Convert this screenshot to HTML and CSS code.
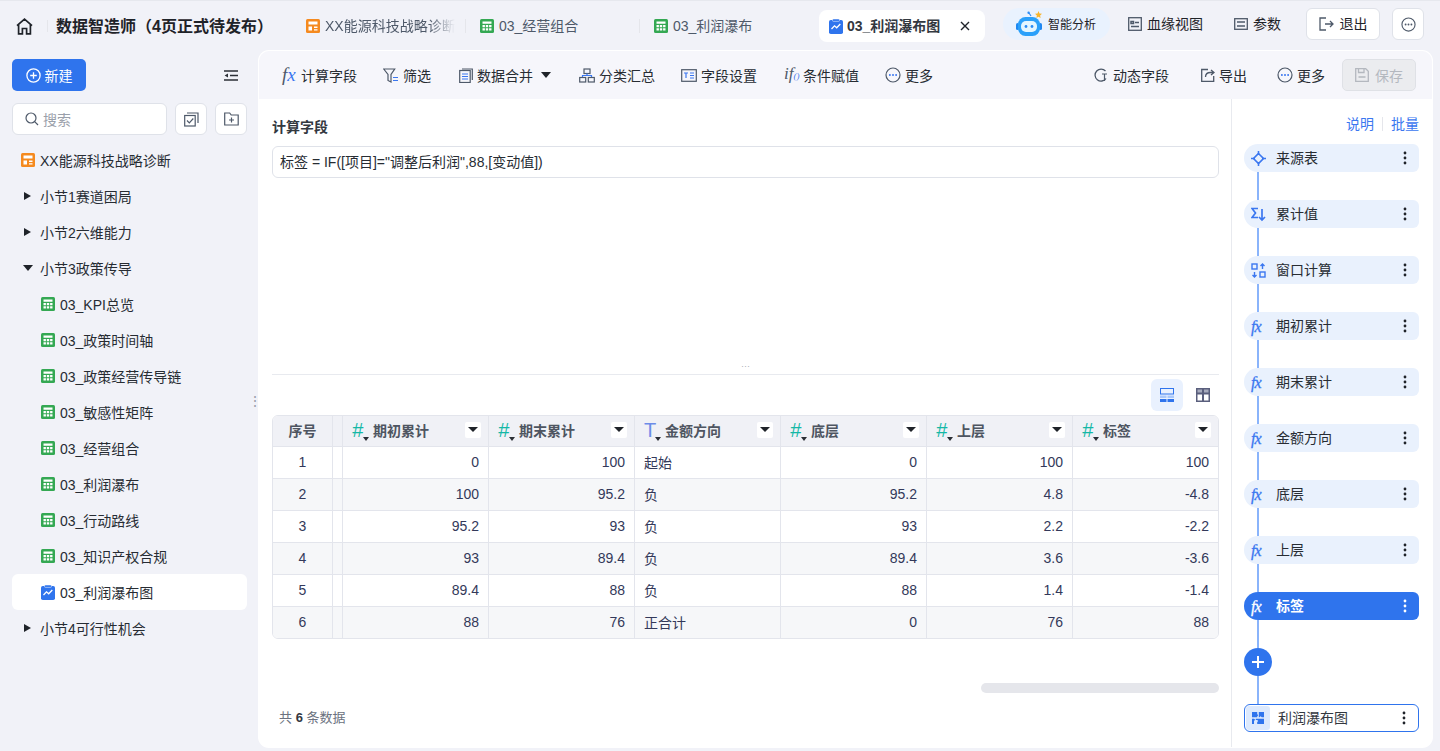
FILE: index.html
```html
<!DOCTYPE html>
<html lang="zh-CN">
<head>
    <meta charset="UTF-8">
    <meta name="viewport" content="width=device-width, initial-scale=1.0">
    <title>数据智造师</title>
    <link rel="stylesheet" href="styles.css">
</head>
<body>
    <svg class="defs" width="0" height="0">
        <symbol id="sheet" viewBox="0 0 14 14">
            <rect width="14" height="14" rx="1.5" fill="#34a853"/>
            <path d="M2.500 2.500h9v2.300h-9zM2.500 6h2.400v2.200H2.500zM5.800 6h2.400v2.200H5.800zM9.100 6h2.400v2.200H9.100zM2.500 9.300h2.400v2.200H2.500zM5.800 9.300h2.400v2.200H5.800zM9.100 9.300h2.400v2.200H9.100z" fill="#fff"/>
        </symbol>
        <symbol id="board" viewBox="0 0 14 14">
            <rect width="14" height="14" rx="1.500" fill="#f58a1f"/>
            <path d="M2.500 2.500h9v3h-9zM2.500 7.500h3.500v4h-3.500zM8 7.500h3.500v1.600H8zM8 10.200h3.500v1.300H8z" fill="#fff"/>
        </symbol>
        <symbol id="chart" viewBox="0 0 14 15">
            <rect y="1" width="14" height="14" rx="1.800" fill="#2f74ed"/>
            <rect x="3.500" width="7" height="2.400" rx="1" fill="#2f74ed" stroke="#fff" stroke-width=".5"/>
            <path d="M2.500 10l3-3.200 2.200 2 3.600-3.800" fill="none" stroke="#fff" stroke-width="1.300"/>
        </symbol>
        <symbol id="more" viewBox="0 0 16 16">
            <circle cx="8" cy="8" r="7" fill="none" stroke="#4e5969" stroke-width="1.200"/>
            <circle cx="4.900" cy="8" r="1" fill="#3b77f0"/>
            <circle cx="8" cy="8" r="1" fill="#3b77f0"/>
            <circle cx="11.100" cy="8" r="1" fill="#3b77f0"/>
        </symbol>
        <symbol id="vdots" viewBox="0 0 4 14">
            <circle cx="2" cy="2" r="1.400"/>
            <circle cx="2" cy="7" r="1.400"/>
            <circle cx="2" cy="12" r="1.400"/>
        </symbol>
    </svg>

    <header class="topbar">
        <svg class="home" width="17" height="17" viewBox="0 0 17 17" fill="none" stroke="#1f2329" stroke-width="1.700">
            <path d="M1 7.600L8.500 1.200 16 7.600M2.600 6.400V15.800h3.800V10.500h4.200v5.300h3.800V6.400"/>
        </svg>
        <span class="topbar-sep"></span>
        <h1 class="app-title">数据智造师（4页正式待发布）</h1>
        <nav class="tabs">
            <div class="tab tab-first"><svg width="14" height="14"><use href="#board"/></svg><span class="tab-fade">XX能源科技战略诊断</span></div>
            <div class="tab"><svg width="14" height="14"><use href="#sheet"/></svg><span>03_经营组合</span></div>
            <div class="tab"><svg width="14" height="14"><use href="#sheet"/></svg><span>03_利润瀑布</span></div>
            <div class="tab-active">
                <svg width="14" height="15"><use href="#chart"/></svg>
                <span>03_利润瀑布图</span>
                <svg class="tab-close" width="10" height="10" viewBox="0 0 10 10" stroke="#1f2329" stroke-width="1.400"><path d="M1 1l8 8M9 1l-8 8"/></svg>
            </div>
        </nav>
        <div class="ai-pill">
            <svg width="28" height="26" viewBox="0 0 28 26">
                <path d="M15 5l-2-3" stroke="#2f8cf5" stroke-width="1.200"/>
                <circle cx="12.600" cy="1.800" r="1.200" fill="#2f8cf5"/>
                <path d="M22.500 0l1 2.400 2.500.3-1.900 1.700.5 2.600-2.100-1.300-2.200 1.300.6-2.600-1.900-1.700 2.500-.3z" fill="#f9b52c"/>
                <rect x="0" y="12" width="3" height="7" rx="1.500" fill="#1e88f2"/>
                <rect x="23" y="12" width="3" height="7" rx="1.500" fill="#1e88f2"/>
                <rect x="2" y="6" width="22" height="19" rx="7.500" fill="#2aa0fa"/>
                <rect x="5" y="10" width="16" height="11" rx="5" fill="#e4f6ff"/>
                <circle cx="10" cy="15.500" r="1.400" fill="#2a8cf5"/>
                <circle cx="16" cy="15.500" r="1.400" fill="#2a8cf5"/>
            </svg>
            <span>智能分析</span>
        </div>
        <div class="top-link top-link-lineage">
            <svg width="14" height="14" viewBox="0 0 14 14" fill="none" stroke="#4e5969" stroke-width="1.300"><rect x=".7" y=".7" width="12.600" height="12.600"/><path d="M3 4.500h2.500v2H3zM3 9.500h8M7 5.500h4" stroke-width="1.500"/></svg>
            <span>血缘视图</span>
        </div>
        <div class="top-link top-link-param">
            <svg width="14" height="14" viewBox="0 0 14 14" fill="none" stroke="#4e5969" stroke-width="1.300"><rect x=".7" y="1.700" width="12.600" height="10.600"/><path d="M3 5h8M3 9h8" stroke-width="1.400"/></svg>
            <span>参数</span>
        </div>
        <button class="btn-logout">
            <svg width="15" height="14" viewBox="0 0 15 14" fill="none" stroke="#4e5969" stroke-width="1.300"><path d="M7 1H1v12h6M6 7h8M11 4l3 3-3 3"/></svg>
            <span>退出</span>
        </button>
        <button class="btn-square"><svg width="15" height="15" viewBox="0 0 16 16"><circle cx="8" cy="8" r="7" fill="none" stroke="#4e5969" stroke-width="1.200"/><circle cx="4.900" cy="8" r="1" fill="#4e5969"/><circle cx="8" cy="8" r="1" fill="#4e5969"/><circle cx="11.100" cy="8" r="1" fill="#4e5969"/></svg></button>
    </header>

    <div class="workspace">
        <aside class="sidebar">
            <div class="side-top">
                <button class="btn-new">
                    <svg width="15" height="15" viewBox="0 0 15 15" fill="none" stroke="#fff" stroke-width="1.300"><circle cx="7.500" cy="7.500" r="6.600"/><path d="M7.500 4.200v6.600M4.200 7.500h6.600"/></svg>
                    <span>新建</span>
                </button>
                <svg width="14" height="11" viewBox="0 0 14 11" stroke="#2b2f36" stroke-width="1.500" fill="#2b2f36"><path d="M0 1h14M6 5.500h8M0 10h14" fill="none"/><path d="M4 3.500L.6 5.500 4 7.500z" stroke="none"/></svg>
            </div>
            <div class="side-search">
                <div class="search-box">
                    <svg width="14" height="14" viewBox="0 0 14 14" fill="none" stroke="#4e5969" stroke-width="1.200"><circle cx="6" cy="6" r="5"/><path d="M9.700 9.700L13 13"/></svg>
                    <span>搜索</span>
                </div>
                <button class="btn-icon"><svg width="15" height="15" viewBox="0 0 15 15" fill="none" stroke="#4e5969" stroke-width="1.200"><rect x=".7" y="3.500" width="10.500" height="10.500"/><path d="M3 1h11v10"/><path d="M3 8.500l2.300 2.300 4-4.300"/></svg></button>
                <button class="btn-icon"><svg width="15" height="14" viewBox="0 0 15 14" fill="none" stroke="#4e5969" stroke-width="1.200"><path d="M.7 1h5l1.500 2h7v10H.7zM5 8h5M7.500 5.500v5"/></svg></button>
            </div>
            <ul class="tree">
                <li class="tree-item"><svg width="14" height="14"><use href="#board"/></svg>XX能源科技战略诊断</li>
                <li class="tree-item tree-group"><i class="caret-right"></i>小节1赛道困局</li>
                <li class="tree-item tree-group"><i class="caret-right"></i>小节2六维能力</li>
                <li class="tree-item tree-group"><i class="caret-down"></i>小节3政策传导</li>
                <li class="tree-item tree-leaf"><svg width="14" height="14"><use href="#sheet"/></svg>03_KPI总览</li>
                <li class="tree-item tree-leaf"><svg width="14" height="14"><use href="#sheet"/></svg>03_政策时间轴</li>
                <li class="tree-item tree-leaf"><svg width="14" height="14"><use href="#sheet"/></svg>03_政策经营传导链</li>
                <li class="tree-item tree-leaf"><svg width="14" height="14"><use href="#sheet"/></svg>03_敏感性矩阵</li>
                <li class="tree-item tree-leaf"><svg width="14" height="14"><use href="#sheet"/></svg>03_经营组合</li>
                <li class="tree-item tree-leaf"><svg width="14" height="14"><use href="#sheet"/></svg>03_利润瀑布</li>
                <li class="tree-item tree-leaf"><svg width="14" height="14"><use href="#sheet"/></svg>03_行动路线</li>
                <li class="tree-item tree-leaf"><svg width="14" height="14"><use href="#sheet"/></svg>03_知识产权合规</li>
                <li class="tree-item tree-leaf tree-active"><svg width="14" height="15"><use href="#chart"/></svg>03_利润瀑布图</li>
                <li class="tree-item tree-group"><i class="caret-right"></i>小节4可行性机会</li>
            </ul>
            <span class="side-grip">⋮</span>
        </aside>

        <main class="panel">
            <div class="toolbar">
                <div class="tool tool-fx"><span class="fx fx-lg"><i>f</i><b>x</b></span>计算字段</div>
                <div class="tool nudge-l"><svg width="16" height="15" viewBox="0 0 16 15" fill="none" stroke="#4e5969" stroke-width="1.200"><path d="M.7 1h11L8 6.500V14l-3-1.500v-6z"/><path d="M10 9.500h5M10 12.500h5" stroke="#3b77f0"/></svg>筛选</div>
                <div class="tool nudge-r"><svg width="14" height="15" viewBox="0 0 14 15" fill="none" stroke="#4e5969" stroke-width="1.200"><rect x=".7" y="2.500" width="10.500" height="12"/><path d="M3 1h10.300v11"/><path d="M3 6h6M3 8.500h6M3 11h6" stroke="#3b77f0"/></svg>数据合并<i class="caret-down tool-caret"></i></div>
                <div class="tool nudge-r"><svg width="16" height="15" viewBox="0 0 16 15" fill="none" stroke="#4e5969" stroke-width="1.200"><rect x="5" y="1" width="6" height="4.500"/><rect x=".7" y="9.500" width="6" height="4.500"/><rect x="9.300" y="9.500" width="6" height="4.500"/><path d="M3.500 9V7.500h9V9M8 5.500v2" stroke="#3b77f0"/></svg>分类汇总</div>
                <div class="tool nudge-l"><svg width="16" height="13" viewBox="0 0 16 13" fill="none" stroke="#4e5969" stroke-width="1.200"><rect x=".7" y=".7" width="14.600" height="11.600"/><path d="M3 4h4M5 4v5M9 4h4M9 6.500h4M9 9h4" stroke="#3b77f0"/></svg>字段设置</div>
                <div class="tool"><span class="fx fx-if"><i>if</i><b>()</b></span>条件赋值</div>
                <div class="tool nudge-l"><svg width="16" height="16"><use href="#more"/></svg>更多</div>
                <div class="toolbar-right">
                    <div class="tool tool-dynamic"><svg width="14" height="14" viewBox="0 0 14 14" fill="none" stroke="#4e5969" stroke-width="1.300"><path d="M12 10.500A6 6 0 1 1 11.500 3"/><path d="M8 6h5M10.500 6v7" stroke-width="1.200"/></svg>动态字段</div>
                    <div class="tool"><svg width="14" height="14" viewBox="0 0 14 14" fill="none" stroke="#4e5969" stroke-width="1.300"><path d="M7 1.500H.7v12h12V8"/><path d="M4.500 9c0-3 2-4.500 5-4.500h3M10 2l3 2.500L10 7"/></svg>导出</div>
                    <div class="tool"><svg width="16" height="16"><use href="#more"/></svg>更多</div>
                    <button class="btn-save">
                        <svg width="14" height="14" viewBox="0 0 14 14" fill="none" stroke="#b4b8bf" stroke-width="1.300"><path d="M.7.7h10l2.600 2.600v10H.7zM3.500 1v3.500h5.500V1M3.500 9h7"/></svg>
                        <span>保存</span>
                    </button>
                </div>
            </div>

            <div class="panel-body">
                <section class="editor">
                    <div class="formula-area">
                        <h2 class="formula-label">计算字段</h2>
                        <div class="formula-input">标签 = IF([项目]="调整后利润",88,[变动值])</div>
                    </div>
                    <div class="drag-dots">···</div>
                    <div class="view-switch">
                        <button class="view-btn view-on"><svg width="14" height="14" viewBox="0 0 14 14"><rect x=".5" y=".5" width="13" height="5.500" fill="none" stroke="#2f74ed"/><rect y="7.500" width="6.500" height="2.500" fill="#a9c8fb"/><rect x="7.500" y="7.500" width="6.500" height="2.500" fill="#a9c8fb"/><rect y="11" width="6.500" height="3" fill="#2f74ed"/><rect x="7.500" y="11" width="6.500" height="3" fill="#2f74ed"/></svg></button>
                        <button class="view-btn"><svg width="14" height="14" viewBox="0 0 14 14"><rect width="14" height="14" fill="#5a5f7d"/><rect x="1.500" y="1.500" width="4.500" height="3" fill="#a7abbd"/><rect x="8" y="1.500" width="4.500" height="3" fill="#a7abbd"/><rect x="1.500" y="6.500" width="4.500" height="6" fill="#fff"/><rect x="8" y="6.500" width="4.500" height="6" fill="#fff"/></svg></button>
                    </div>
                    <div class="table-wrap">
                        <table class="grid">
                            <colgroup>
                                <col class="col-seq"><col class="col-gap"><col class="col-data"><col class="col-data"><col class="col-data"><col class="col-data"><col class="col-data"><col class="col-data">
                            </colgroup>
                            <thead>
                                <tr>
                                    <th class="seq">序号</th><th></th>
                                    <th><div class="th-in"><span class="type type-num">#</span><span class="th-name">期初累计</span><span class="th-menu"></span></div></th>
                                    <th><div class="th-in"><span class="type type-num">#</span><span class="th-name">期末累计</span><span class="th-menu"></span></div></th>
                                    <th><div class="th-in"><span class="type type-text">T</span><span class="th-name">金额方向</span><span class="th-menu"></span></div></th>
                                    <th><div class="th-in"><span class="type type-num">#</span><span class="th-name">底层</span><span class="th-menu"></span></div></th>
                                    <th><div class="th-in"><span class="type type-num">#</span><span class="th-name">上层</span><span class="th-menu"></span></div></th>
                                    <th><div class="th-in"><span class="type type-num">#</span><span class="th-name">标签</span><span class="th-menu"></span></div></th>
                                </tr>
                            </thead>
                            <tbody>
                                <tr><td class="seq">1</td><td></td><td class="num">0</td><td class="num">100</td><td>起始</td><td class="num">0</td><td class="num">100</td><td class="num">100</td></tr>
                                <tr><td class="seq">2</td><td></td><td class="num">100</td><td class="num">95.2</td><td>负</td><td class="num">95.2</td><td class="num">4.8</td><td class="num">-4.8</td></tr>
                                <tr><td class="seq">3</td><td></td><td class="num">95.2</td><td class="num">93</td><td>负</td><td class="num">93</td><td class="num">2.2</td><td class="num">-2.2</td></tr>
                                <tr><td class="seq">4</td><td></td><td class="num">93</td><td class="num">89.4</td><td>负</td><td class="num">89.4</td><td class="num">3.6</td><td class="num">-3.6</td></tr>
                                <tr><td class="seq">5</td><td></td><td class="num">89.4</td><td class="num">88</td><td>负</td><td class="num">88</td><td class="num">1.4</td><td class="num">-1.4</td></tr>
                                <tr><td class="seq">6</td><td></td><td class="num">88</td><td class="num">76</td><td>正合计</td><td class="num">0</td><td class="num">76</td><td class="num">88</td></tr>
                            </tbody>
                        </table>
                    </div>
                    <div class="h-scroll"><span></span></div>
                    <div class="table-foot">共 <b>6</b> 条数据</div>
                </section>

                <aside class="steps">
                    <div class="steps-links"><a>说明</a><span></span><a>批量</a></div>
                    <div class="step"><svg class="step-icon" width="15" height="15" viewBox="0 0 15 15" fill="none" stroke="#3b77f0" stroke-width="1.600"><path d="M7.500 2.500L12.500 7.500 7.500 12.500 2.500 7.500z"/><path d="M7.500 0v4M7.500 11v4M0 7.500h4M11 7.500h4"/></svg><span class="step-name">来源表</span><svg class="step-dots" width="4" height="14"><use href="#vdots"/></svg></div>
                    <div class="step-link"></div>
                    <div class="step"><svg class="step-icon" width="15" height="15" viewBox="0 0 15 15" fill="none" stroke="#3b77f0" stroke-width="1.700"><path d="M7 1.500H1l3.500 4.500L1 10.500h6"/><path d="M11 2v11M8 10l3 3 3-3"/></svg><span class="step-name">累计值</span><svg class="step-dots" width="4" height="14"><use href="#vdots"/></svg></div>
                    <div class="step-link"></div>
                    <div class="step"><svg class="step-icon" width="15" height="15" viewBox="0 0 15 15" fill="none" stroke="#3b77f0" stroke-width="1.400"><rect x="1" y="1" width="5" height="5"/><rect x="9" y="9" width="5" height="5"/><path d="M11.500 6V1M9.500 3l2-2 2 2M3.500 9v5M1.500 12l2 2 2-2"/></svg><span class="step-name">窗口计算</span><svg class="step-dots" width="4" height="14"><use href="#vdots"/></svg></div>
                    <div class="step-link"></div>
                    <div class="step"><span class="fx step-fx"><i>f</i><b>x</b></span><span class="step-name">期初累计</span><svg class="step-dots" width="4" height="14"><use href="#vdots"/></svg></div>
                    <div class="step-link"></div>
                    <div class="step"><span class="fx step-fx"><i>f</i><b>x</b></span><span class="step-name">期末累计</span><svg class="step-dots" width="4" height="14"><use href="#vdots"/></svg></div>
                    <div class="step-link"></div>
                    <div class="step"><span class="fx step-fx"><i>f</i><b>x</b></span><span class="step-name">金额方向</span><svg class="step-dots" width="4" height="14"><use href="#vdots"/></svg></div>
                    <div class="step-link"></div>
                    <div class="step"><span class="fx step-fx"><i>f</i><b>x</b></span><span class="step-name">底层</span><svg class="step-dots" width="4" height="14"><use href="#vdots"/></svg></div>
                    <div class="step-link"></div>
                    <div class="step"><span class="fx step-fx"><i>f</i><b>x</b></span><span class="step-name">上层</span><svg class="step-dots" width="4" height="14"><use href="#vdots"/></svg></div>
                    <div class="step-link"></div>
                    <div class="step step-on"><span class="fx step-fx"><i>f</i><b>x</b></span><span class="step-name">标签</span><svg class="step-dots" width="4" height="14"><use href="#vdots"/></svg></div>
                    <div class="step-link"></div>
                    <button class="step-add"><svg width="14" height="14" viewBox="0 0 14 14" stroke="#fff" stroke-width="2"><path d="M7 1v12M1 7h12"/></svg></button>
                    <div class="step-link"></div>
                    <div class="step-output">
                        <span class="output-icon"><svg width="12" height="12" viewBox="0 0 12 12" fill="#2f74ed"><path d="M0 0h5.200v2l1 1.200-1 1.200V5.200H0zM6.800 0H12v5.200H9.800L8.600 4.200 7.400 5.200H6.800zM0 6.800h2l1.200 1-1.200 1.200V12H0zM3.800 6.800H12V12H5.200v-2L6.200 8.900 5.200 8H3.800z"/></svg></span>
                        <span class="step-name">利润瀑布图</span>
                        <svg class="step-dots" width="4" height="14"><use href="#vdots"/></svg>
                    </div>
                </aside>
            </div>
        </main>
    </div>
</body>
</html>
```

FILE: styles.css
```css
* {
    box-sizing: border-box;
}

html, body {
    height: 100%;
}

body {
    margin: 0;
    display: flex;
    flex-direction: column;
    height: 751px;
    overflow: hidden;
    font-family: "Liberation Sans", "Noto Sans CJK SC", sans-serif;
    font-size: 14px;
    color: #1f2329;
    background-color: #f1f2f8;
    border-top: 1px solid #e6e8ee;
}

button {
    font: inherit;
    color: inherit;
    cursor: pointer;
}

ul {
    list-style: none;
    margin: 0;
    padding: 0;
}

.defs {
    position: absolute;
}

/* top bar */
.topbar {
    display: flex;
    align-items: center;
    height: 50px;
    flex: none;
    padding-left: 16px;
}

.home {
    flex: none;
}

.topbar-sep {
    width: 1px;
    height: 12px;
    margin: 0 8px 0 14px;
    background-color: #e5e6eb;
}

.app-title {
    margin: 0 0 2px;
    width: 236px;
    font-size: 16px;
    font-weight: 700;
    white-space: nowrap;
}

.tabs {
    display: flex;
    align-items: center;
    width: 693px;
}

.tab span,
.tab-active span,
.ai-pill span,
.top-link span,
.btn-logout span {
    margin-bottom: 2px;
}

.tab {
    display: flex;
    align-items: center;
    gap: 5px;
    width: 174px;
    height: 14px;
    padding-left: 14px;
    color: #4e5969;
    border-right: 1px solid #e5e6eb;
    white-space: nowrap;
}

.tab:nth-child(3) {
    border-right: none;
    width: 179px;
}

.tab-fade {
    width: 130px;
    overflow: hidden;
    -webkit-mask-image: linear-gradient(to right, #000 80%, transparent);
    mask-image: linear-gradient(to right, #000 80%, transparent);
}

.tab-active {
    display: flex;
    align-items: center;
    gap: 4px;
    width: 166px;
    height: 32px;
    padding-left: 10px;
    background-color: #fff;
    border-radius: 8px;
    font-weight: 700;
    color: #33383f;
    white-space: nowrap;
}

.tab-close {
    margin-left: auto;
    margin-right: 15px;
}

.ai-pill,
.top-link,
.btn-logout,
.btn-square {
    margin-bottom: 4px;
}

.ai-pill {
    display: flex;
    align-items: center;
    gap: 4px;
    width: 107px;
    height: 32px;
    margin-left: 18px;
    padding-left: 13px;
    border-radius: 16px;
    background-color: #e9f2fe;
    font-size: 12px;
    color: #1f2329;
}

.top-link {
    display: flex;
    align-items: center;
    gap: 5px;
    font-size: 14px;
    white-space: nowrap;
}

.top-link-lineage {
    margin-left: 18px;
}

.top-link-param {
    margin-left: 31px;
}

.btn-logout {
    display: flex;
    align-items: center;
    justify-content: center;
    gap: 6px;
    width: 74px;
    height: 32px;
    margin-left: 25px;
    background-color: #fff;
    border: 1px solid #dfe2e9;
    border-radius: 6px;
}

.btn-square {
    display: flex;
    align-items: center;
    justify-content: center;
    width: 32px;
    height: 32px;
    margin-left: 12px;
    padding: 0;
    background-color: #fff;
    border: 1px solid #dfe2e9;
    border-radius: 6px;
}

.workspace {
    display: flex;
    flex: 1;
    min-height: 0;
    padding: 0 8px 4px 0;
}

/* left tree */
.sidebar {
    position: relative;
    flex: none;
    width: 259px;
}

.side-top {
    display: flex;
    align-items: center;
    justify-content: space-between;
    padding: 8px 21px 0 12px;
}

.btn-new {
    display: flex;
    align-items: center;
    justify-content: center;
    gap: 4px;
    width: 74px;
    height: 32px;
    padding: 0;
    border: none;
    border-radius: 5px;
    background-color: #2f74ed;
    color: #fff;
}

.side-search {
    display: flex;
    gap: 8px;
    padding: 12px 12px 0;
}

.search-box {
    display: flex;
    align-items: center;
    gap: 4px;
    width: 155px;
    height: 32px;
    padding-left: 12px;
    background-color: #fff;
    border: 1px solid #dfe2e9;
    border-radius: 6px;
    color: #9aa0aa;
}

.btn-icon {
    display: flex;
    align-items: center;
    justify-content: center;
    width: 32px;
    height: 32px;
    padding: 0;
    background-color: #fff;
    border: 1px solid #dfe2e9;
    border-radius: 6px;
}

.tree {
    padding: 7px 12px 0;
}

.tree-item {
    display: flex;
    align-items: center;
    gap: 5px;
    height: 36px;
    padding-left: 9px;
    white-space: nowrap;
    color: #272c33;
}

.tree-group {
    gap: 0;
    padding-left: 12px;
}

.tree-leaf {
    gap: 5px;
    padding-left: 29px;
}

.tree-active {
    background-color: #fff;
    border-radius: 6px;
}

.caret-right {
    width: 0;
    height: 0;
    margin-right: 9px;
    border-top: 4px solid transparent;
    border-bottom: 4px solid transparent;
    border-left: 7px solid #1f2329;
}

.caret-down {
    width: 0;
    height: 0;
    margin-right: 7px;
    margin-left: -1px;
    border-left: 5px solid transparent;
    border-right: 5px solid transparent;
    border-top: 6px solid #1f2329;
}

.side-grip {
    position: absolute;
    right: -3px;
    top: 340px;
    color: #9aa0aa;
    font-size: 14px;
    line-height: 20px;
}

/* main panel */
.panel {
    flex: 1;
    display: flex;
    flex-direction: column;
    min-width: 0;
    background-color: #fff;
    border-radius: 10px;
    box-shadow: 0 0 0 1px #fff;
    overflow: hidden;
}

.toolbar {
    display: flex;
    align-items: center;
    gap: 27px;
    flex: none;
    height: 48px;
    padding: 0 16px 0 23px;
    background-color: #f6f6fb;
}

.tool {
    display: flex;
    align-items: center;
    gap: 4px;
    white-space: nowrap;
    color: #272c33;
}

.tool-fx {
    gap: 3px;
}

.nudge-l {
    margin-left: -1px;
}

.nudge-r {
    margin-left: 1px;
}

.toolbar-right {
    display: flex;
    align-items: center;
    gap: 30px;
    margin-left: auto;
}

.tool-dynamic {
    gap: 5px;
    margin-right: 2px;
}

.tool-caret {
    margin: 0 0 0 4px;
}

.btn-save {
    display: flex;
    align-items: center;
    justify-content: center;
    gap: 6px;
    width: 74px;
    height: 32px;
    margin-left: -13px;
    padding: 0;
    background-color: #ebecef;
    border: 1px solid #dfe1e6;
    border-radius: 5px;
    color: #b4b8bf;
}

.fx {
    display: inline-flex;
    align-items: baseline;
    font-family: "Liberation Serif", serif;
    font-style: italic;
}

.fx i {
    color: #4e5969;
}

.fx b {
    font-weight: 400;
    color: #3b77f0;
}

.fx-lg {
    width: 16px;
    font-size: 19px;
    line-height: 16px;
}

.fx-if {
    width: 15px;
    font-size: 17px;
    line-height: 16px;
}

.fx-if b {
    font-size: 9px;
}

.panel-body {
    flex: 1;
    display: flex;
    min-height: 0;
}

.editor {
    flex: 1;
    min-width: 0;
    display: flex;
    flex-direction: column;
    padding: 0 12px 0 13px;
}

.formula-area {
    height: 276px;
    flex: none;
    border-bottom: 1px solid #e8eaef;
}

.formula-label {
    margin: 19px 0 10px;
    font-size: 14px;
    line-height: 18px;
    font-weight: 700;
    color: #33383f;
}

.formula-input {
    display: flex;
    align-items: center;
    height: 32px;
    padding: 0 0 2px 7px;
    border: 1px solid #dfe2e9;
    border-radius: 6px;
    font-size: 14px;
    color: #272c33;
}

.drag-dots {
    height: 0;
    margin-top: -15px;
    text-align: center;
    font-size: 9px;
    line-height: 12px;
    color: #a9adb5;
    overflow: visible;
}

.view-switch {
    display: flex;
    justify-content: flex-end;
    gap: 4px;
    margin-top: 19px;
    height: 32px;
}

.view-btn {
    display: flex;
    align-items: center;
    justify-content: center;
    width: 32px;
    height: 32px;
    padding: 0;
    background: none;
    border: none;
    border-radius: 6px;
}

.view-on {
    background-color: #e9f1fe;
}

.table-wrap {
    margin-top: 4px;
    border: 1px solid #e3e5ec;
    border-radius: 6px;
    overflow: hidden;
}

.grid {
    width: 945px;
    table-layout: fixed;
    border-collapse: separate;
    border-spacing: 0;
}

.col-seq {
    width: 59px;
}

.col-gap {
    width: 10px;
}

.col-data {
    width: 146px;
}

.grid th {
    height: 31px;
    padding: 0 0 2px;
    background-color: #f0f1f6;
    border-left: 1px solid #e3e5ec;
    border-bottom: 1px solid #e3e5ec;
    font-size: 14px;
    font-weight: 700;
    color: #4e5561;
    text-align: left;
}

.grid td {
    height: 32px;
    padding: 0 9px 2px;
    border-left: 1px solid #e3e5ec;
    border-bottom: 1px solid #e3e5ec;
    font-size: 14px;
    color: #33395a;
}

.grid tr > :first-child {
    border-left: none;
}

.grid tbody tr:last-child td {
    height: 31px;
    border-bottom: none;
}

.grid tbody tr:nth-child(even) td {
    background-color: #f6f7f9;
}

.grid .seq {
    text-align: center;
    padding: 0 0 2px;
}

.grid .num {
    text-align: right;
}

.th-in {
    display: flex;
    align-items: center;
    padding: 0 7px 0 9px;
}

.type {
    position: relative;
    width: 21px;
    font-size: 20px;
    font-weight: 400;
    line-height: 20px;
}

.type::after {
    content: "";
    position: absolute;
    left: 11px;
    bottom: -1px;
    border-left: 3px solid transparent;
    border-right: 3px solid transparent;
    border-top: 4px solid #2b2f36;
}

.type-num {
    font-style: italic;
    color: #14b8a6;
}

.type-text {
    color: #6c8ce8;
}

.th-name {
    flex: 1;
}

.th-menu {
    position: relative;
    width: 16px;
    height: 16px;
    background-color: #fff;
    border-radius: 2px;
}

.th-menu::after {
    content: "";
    position: absolute;
    left: 3px;
    top: 5px;
    border-left: 5px solid transparent;
    border-right: 5px solid transparent;
    border-top: 5px solid #1f2329;
}

.h-scroll {
    display: flex;
    justify-content: flex-end;
    margin-top: 44px;
}

.h-scroll span {
    width: 238px;
    height: 10px;
    border-radius: 5px;
    background-color: #e5e6eb;
}

.table-foot {
    margin: 15px 0 0 7px;
    font-size: 13px;
    line-height: 20px;
    color: #6b7280;
}

.table-foot b {
    color: #33383f;
}

/* right pipeline */
.steps {
    flex: none;
    width: 201px;
    padding: 0 13px 0 12px;
    border-left: 1px solid #e8eaef;
    display: flex;
    flex-direction: column;
    align-items: stretch;
}

.steps-links {
    display: flex;
    align-items: center;
    justify-content: flex-end;
    gap: 8px;
    height: 20px;
    margin-top: 15px;
    margin-bottom: 10px;
    color: #3b77f0;
    font-size: 14px;
}

.steps-links a {
    margin-bottom: 2px;
}

.steps-links span {
    width: 1px;
    height: 14px;
    background-color: #e5e6eb;
}

.step {
    display: flex;
    align-items: center;
    flex: none;
    height: 28px;
    padding: 0 12px 0 7px;
    border-radius: 14px 6px 6px 14px;
    background-color: #e9f1fd;
    font-size: 14px;
    color: #272c33;
}

.step-name {
    margin-bottom: 2px;
}

.step-icon,
.step-fx {
    flex: none;
    width: 15px;
    margin-right: 10px;
}

.step-fx {
    font-size: 16px;
    line-height: 15px;
    letter-spacing: -1px;
    -webkit-text-stroke: .3px currentColor;
    color: #3b77f0;
}

.step-fx i,
.step-fx b {
    color: #3b77f0;
    font-weight: 400;
}

.step-dots {
    margin-left: auto;
    fill: #1f2329;
}

.step-link {
    flex: none;
    width: 2px;
    height: 28px;
    margin-left: 13px;
    background-color: #8ab4fb;
}

.step-on {
    background-color: #2f74ed;
    color: #fff;
    font-weight: 700;
}

.step-on .step-fx {
    color: #fff;
}

.step-on .step-fx i,
.step-on .step-fx b {
    color: #fff;
}

.step-on .step-dots {
    fill: #fff;
}

.step-add {
    display: flex;
    align-items: center;
    justify-content: center;
    flex: none;
    width: 28px;
    height: 28px;
    padding: 0;
    border: none;
    border-radius: 50%;
    background-color: #2f74ed;
}

.step-output {
    display: flex;
    align-items: center;
    flex: none;
    gap: 8px;
    height: 28px;
    padding: 0 12px 0 1px;
    border: 1px solid #2f74ed;
    border-radius: 6px;
    background-color: #fff;
    font-size: 14px;
    color: #33383f;
}

.output-icon {
    display: flex;
    align-items: center;
    justify-content: center;
    width: 24px;
    height: 24px;
    border-radius: 3px;
    background-color: #dce9fd;
}
```
